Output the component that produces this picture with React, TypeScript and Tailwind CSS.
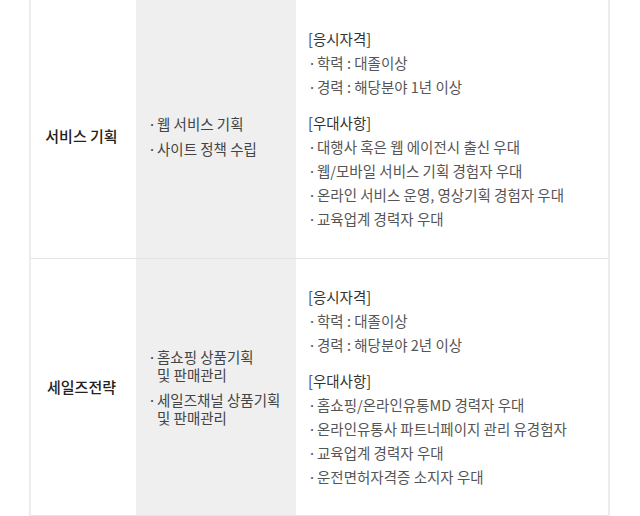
import React from 'react'

type Row = {
  title: string
  duties: string[][]
  qualify: string[]
  prefer: string[]
  height: string
  offset: string
}

const rows: Row[] = [
  {
    title: '서비스 기획',
    duties: [['웹 서비스 기획'], ['사이트 정책 수립']],
    qualify: ['학력 : 대졸이상', '경력 : 해당분야 1년 이상'],
    prefer: [
      '대행사 혹은 웹 에이전시 출신 우대',
      '웹/모바일 서비스 기획 경험자 우대',
      '온라인 서비스 운영, 영상기획 경험자 우대',
      '교육업계 경력자 우대',
    ],
    height: 'h-[259px]',
    offset: 'pt-[15px]',
  },
  {
    title: '세일즈전략',
    duties: [
      ['홈쇼핑 상품기획', '및 판매관리'],
      ['세일즈채널 상품기획', '및 판매관리'],
    ],
    qualify: ['학력 : 대졸이상', '경력 : 해당분야 2년 이상'],
    prefer: [
      '홈쇼핑/온라인유통MD 경력자 우대',
      '온라인유통사 파트너페이지 관리 유경험자',
      '교육업계 경력자 우대',
      '운전면허자격증 소지자 우대',
    ],
    height: 'h-[257px]',
    offset: 'pt-0',
  },
]

function Bullet({ children }: { children: React.ReactNode }) {
  return (
    <li className="flex">
      <span className="w-[9px] shrink-0">·</span>
      <span>{children}</span>
    </li>
  )
}

export default function App() {
  return (
    <div
      className="w-[640px] h-[516px] bg-white overflow-hidden"
      style={{ fontFamily: '"Noto Sans CJK KR", "Noto Sans", sans-serif' }}
    >
      <div className="ml-[29px] w-[581px] border-x-2 border-[#ececec]">
        {rows.map((row) => (
          <div key={row.title} className={`flex ${row.height} border-b border-[#e4e4e4]`}>
            {/* 직무 */}
            <div
              className={`w-[105px] flex items-center justify-center pr-[4px] ${row.offset} text-[15px] font-medium text-[#222]`}
            >
              {row.title}
            </div>

            {/* 담당업무 */}
            <div className={`w-[160px] bg-[#efefef] flex items-center pl-[12px] pr-2 ${row.offset}`}>
              <ul className="flex flex-col gap-[7px] text-[14.5px] leading-[18px] text-[#444]">
                {row.duties.map((d, i) => (
                  <Bullet key={i}>
                    {d.map((line, j) => (
                      <React.Fragment key={j}>
                        {j > 0 && <br />}
                        {line}
                      </React.Fragment>
                    ))}
                  </Bullet>
                ))}
              </ul>
            </div>

            {/* 자격요건 */}
            <div className="flex-1 flex items-center pl-[12px] text-[14.5px] leading-6 text-[#555]">
              <div>
                <p className="text-[#333]">[응시자격]</p>
                <ul>
                  {row.qualify.map((q) => (
                    <Bullet key={q}>{q}</Bullet>
                  ))}
                </ul>
                <p className="mt-3 text-[#333]">[우대사항]</p>
                <ul>
                  {row.prefer.map((p) => (
                    <Bullet key={p}>{p}</Bullet>
                  ))}
                </ul>
              </div>
            </div>
          </div>
        ))}
      </div>
    </div>
  )
}
